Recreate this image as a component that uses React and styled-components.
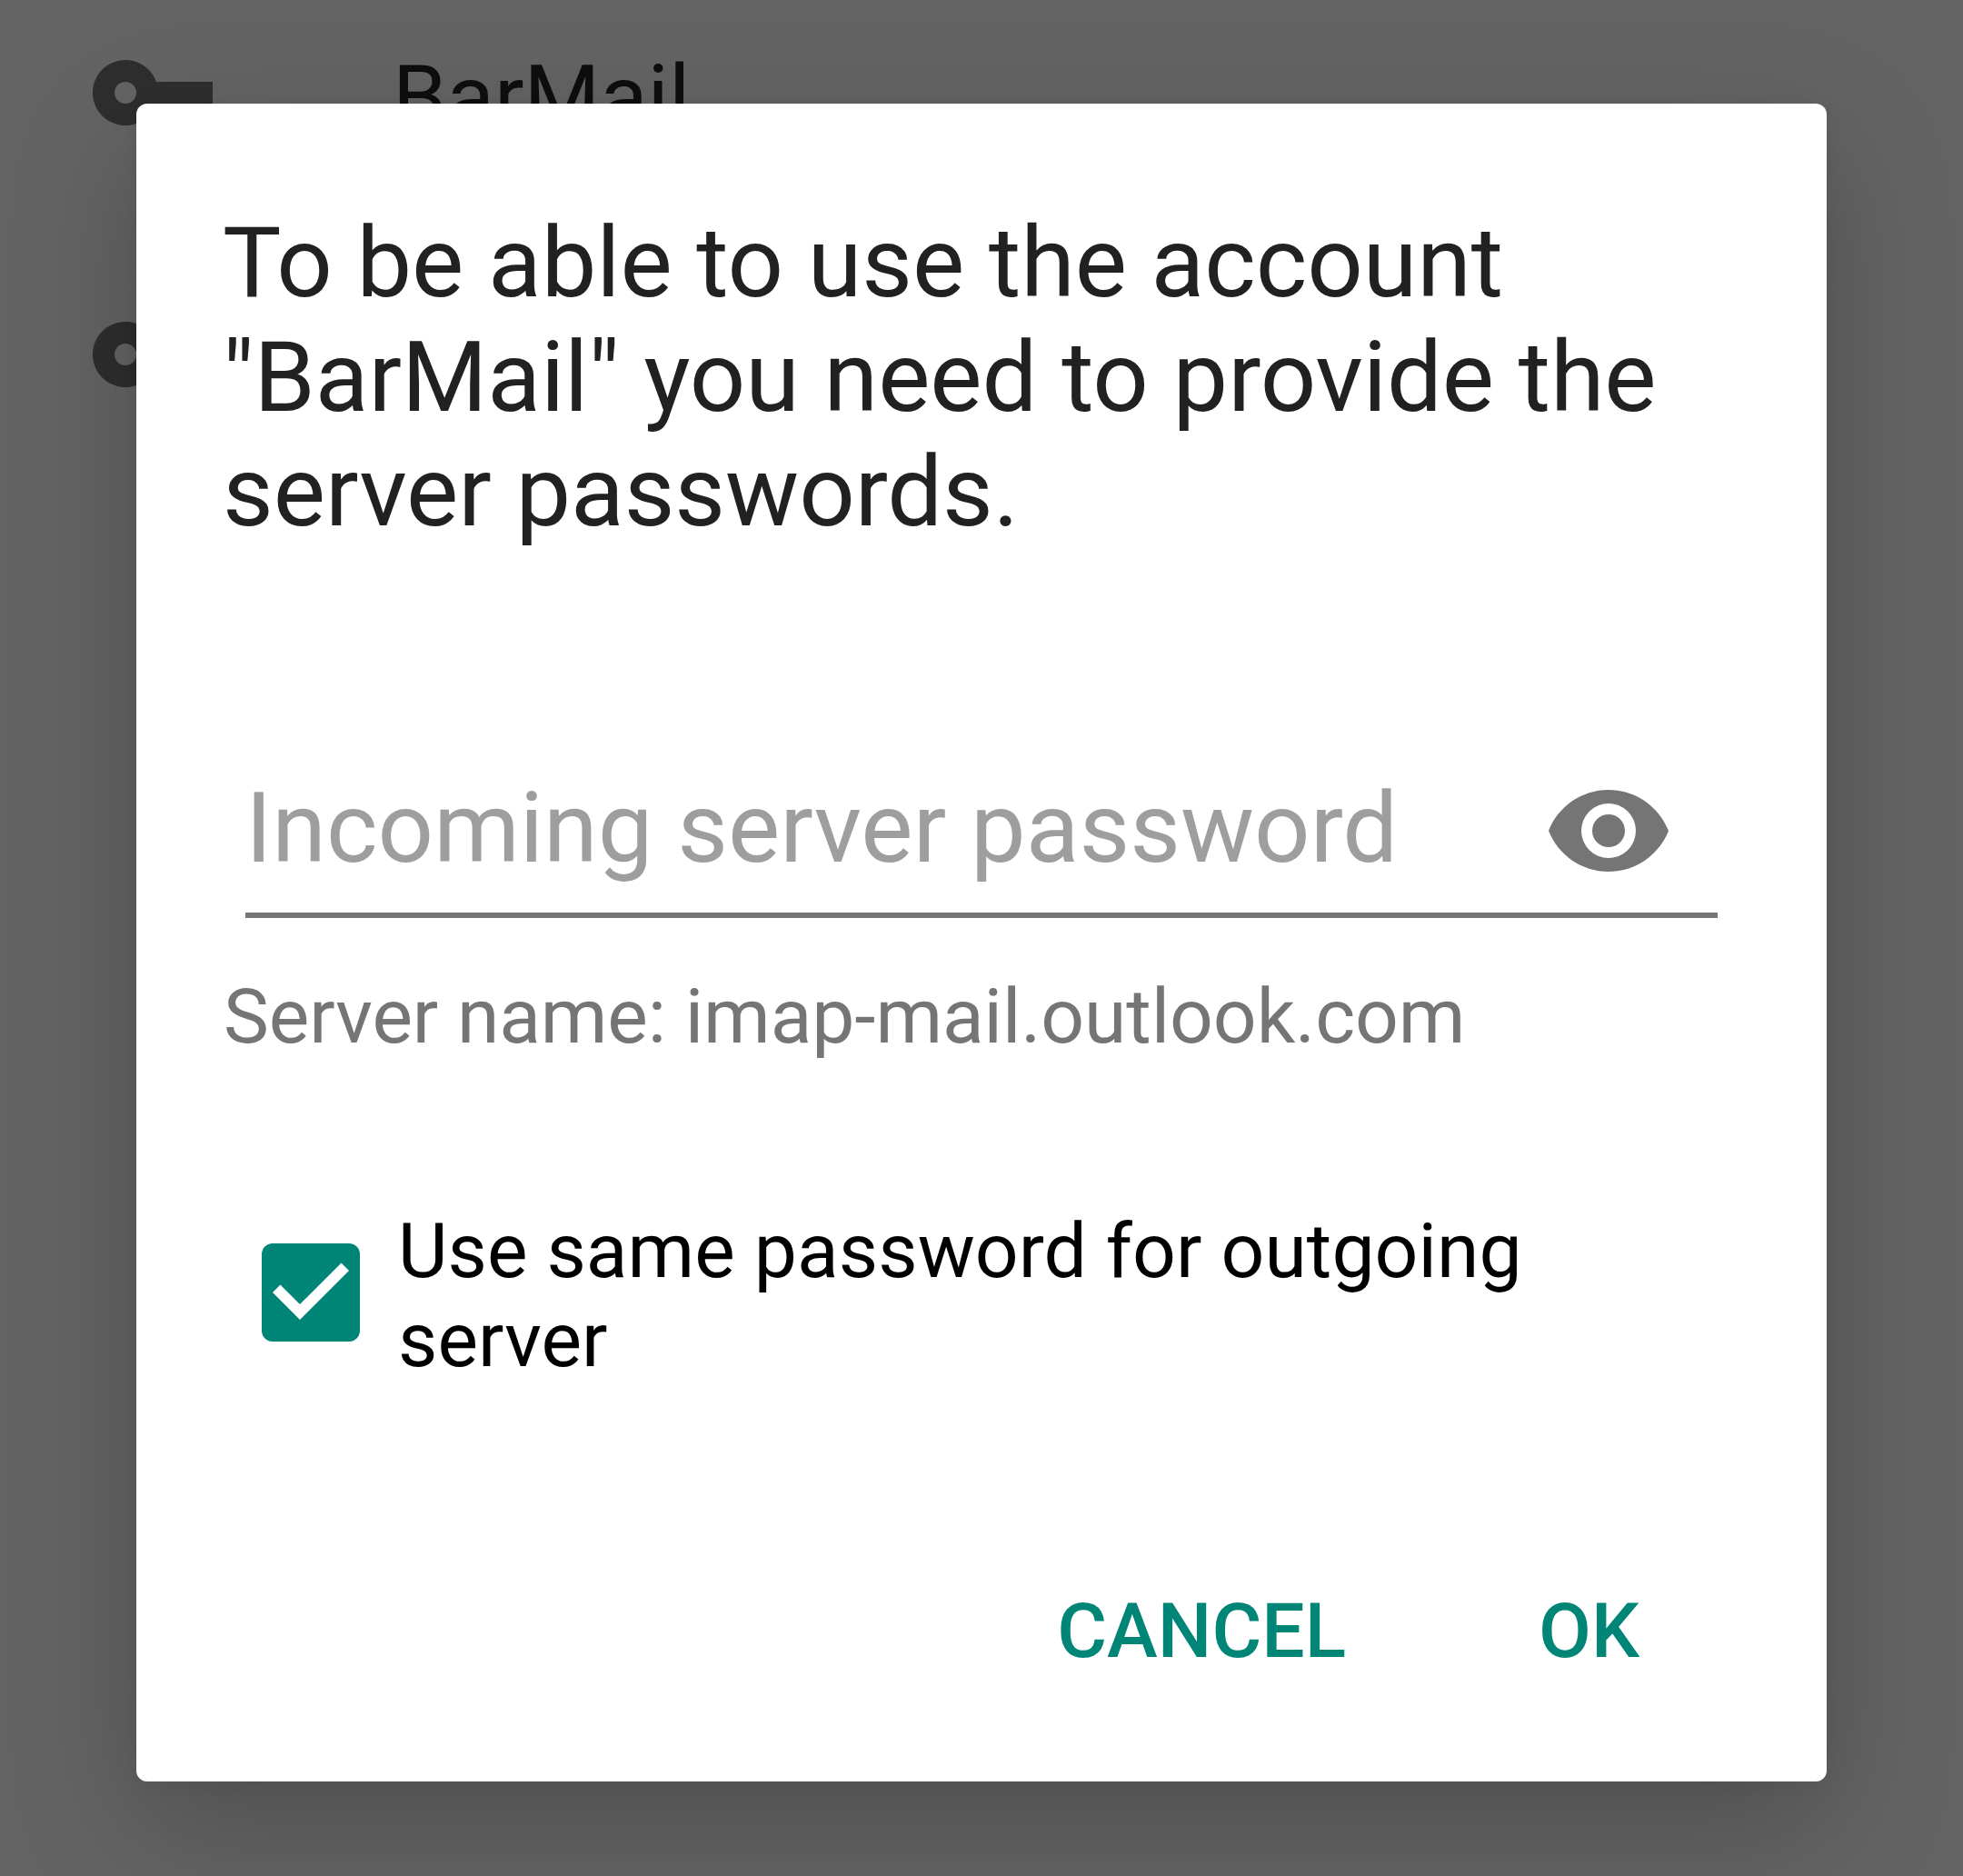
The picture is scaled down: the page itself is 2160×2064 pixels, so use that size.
import React from "react";
import styled, { createGlobalStyle } from "styled-components";

const Global = createGlobalStyle`
  * { box-sizing: border-box; }
  body { margin: 0; background: #646464; font-family: Roboto, "Noto Sans", sans-serif; }
  h1, p { margin: 0; font-weight: 400; }
  button { border: 0; background: none; padding: 0; font: inherit; }
`;
const Screen = styled.main`
  position: relative; width: 2160px; height: 2064px; overflow: hidden; background: #646464;
`;
const Accounts = styled.div`
  color: #0e0e0e;
`;
const AccountRow = styled.div`
  display: flex; align-items: center; height: 288px; margin-top: ${p => p.$first ? "-42px" : "0"};
  padding-left: 102px; gap: 198px;
`;
const AccountName = styled.span`
  padding-top: 10px; font-size: 96px; line-height: 112px;
`;
const KeyIcon = styled.svg`
  width: 132px; height: 72px; fill: #2e2e2e; flex: none;
`;
const Overlay = styled.div`
  position: absolute; inset: 0; display: flex; justify-content: center; padding-top: 114px;
`;
const Dialog = styled.section`
  width: 1860px; height: 1846px; padding: 112px 96px 0; border-radius: 12px; background: #fff;
  box-shadow: 0 48px 144px rgba(0,0,0,.22), 0 4px 18px rgba(0,0,0,.04);
`;
const Title = styled.h1`
  margin-left: -1px; font-size: 108px; line-height: 126px; letter-spacing: -0.06px;
  color: #212121; white-space: nowrap;
`;
const Field = styled.div`
  display: flex; align-items: center; justify-content: space-between; width: 1620px; height: 192px;
  margin: 214px 0 0 24px; padding-right: 54px; border-bottom: 6px solid #757575;
`;
const Placeholder = styled.span`
  font-size: 108px; line-height: 126px; color: #9e9e9e; white-space: nowrap;
`;
const Eye = styled.svg`
  width: 132px; height: 90px; margin-top: 6px; fill: #757575; flex: none;
`;
const Hint = styled.p`
  margin-top: 60px; font-size: 84px; line-height: 98px; letter-spacing: -0.1px;
  color: #757575; white-space: nowrap;
`;
const Option = styled.label`
  display: flex; align-items: center; gap: 42px; margin: 160px 0 0 42px;
`;
const Box = styled.svg`
  width: 108px; height: 108px; margin-bottom: 8px; flex: none;
`;
const OptionText = styled.span`
  font-size: 84px; line-height: 98px; letter-spacing: 0.06px; color: #000;
`;
const Actions = styled.div`
  display: flex; justify-content: flex-end; gap: 212px; margin-top: 222px; padding-right: 110px;
`;
const Action = styled.button`
  font-size: 84px; line-height: 98px; font-weight: 500; color: #008577;
`;
const Key = () => <KeyIcon viewBox="0 0 22 12"><path d="M11.65 4A6 6 0 1 0 11.65 8H16v4h4V8h2V4zM6 8a2 2 0 1 1 0-4 2 2 0 0 1 0 4z"/></KeyIcon>;

export default function App() {
  return <><Global /><Screen>
    <Accounts>
      <AccountRow $first><Key /><AccountName>BarMail</AccountName></AccountRow>
      <AccountRow><Key /></AccountRow>
    </Accounts>
    <Overlay><Dialog role="dialog">
      <Title>To be able to use the account<br />"BarMail" you need to provide the<br />server passwords.</Title>
      <Field><Placeholder>Incoming server password</Placeholder>
        <Eye viewBox="1 4.5 22 15"><path d="M12 4.5C7 4.5 2.73 7.61 1 12c1.73 4.39 6 7.5 11 7.5s9.27-3.11 11-7.5c-1.73-4.39-6-7.5-11-7.5zM12 17a5 5 0 1 1 0-10 5 5 0 0 1 0 10zm0-8a3 3 0 1 0 0 6 3 3 0 0 0 0-6z"/></Eye>
      </Field>
      <Hint>Server name: imap-mail.outlook.com</Hint>
      <Option><Box viewBox="3 3 18 18"><rect x="3" y="3" width="18" height="18" rx="2" fill="#008577"/><path fill="#fff" d="M10 17l-5-5 1.41-1.41L10 14.17l7.59-7.59L19 8z"/></Box>
        <OptionText>Use same password for outgoing<br />server</OptionText></Option>
      <Actions><Action>CANCEL</Action><Action>OK</Action></Actions>
    </Dialog></Overlay>
  </Screen></>;
}
